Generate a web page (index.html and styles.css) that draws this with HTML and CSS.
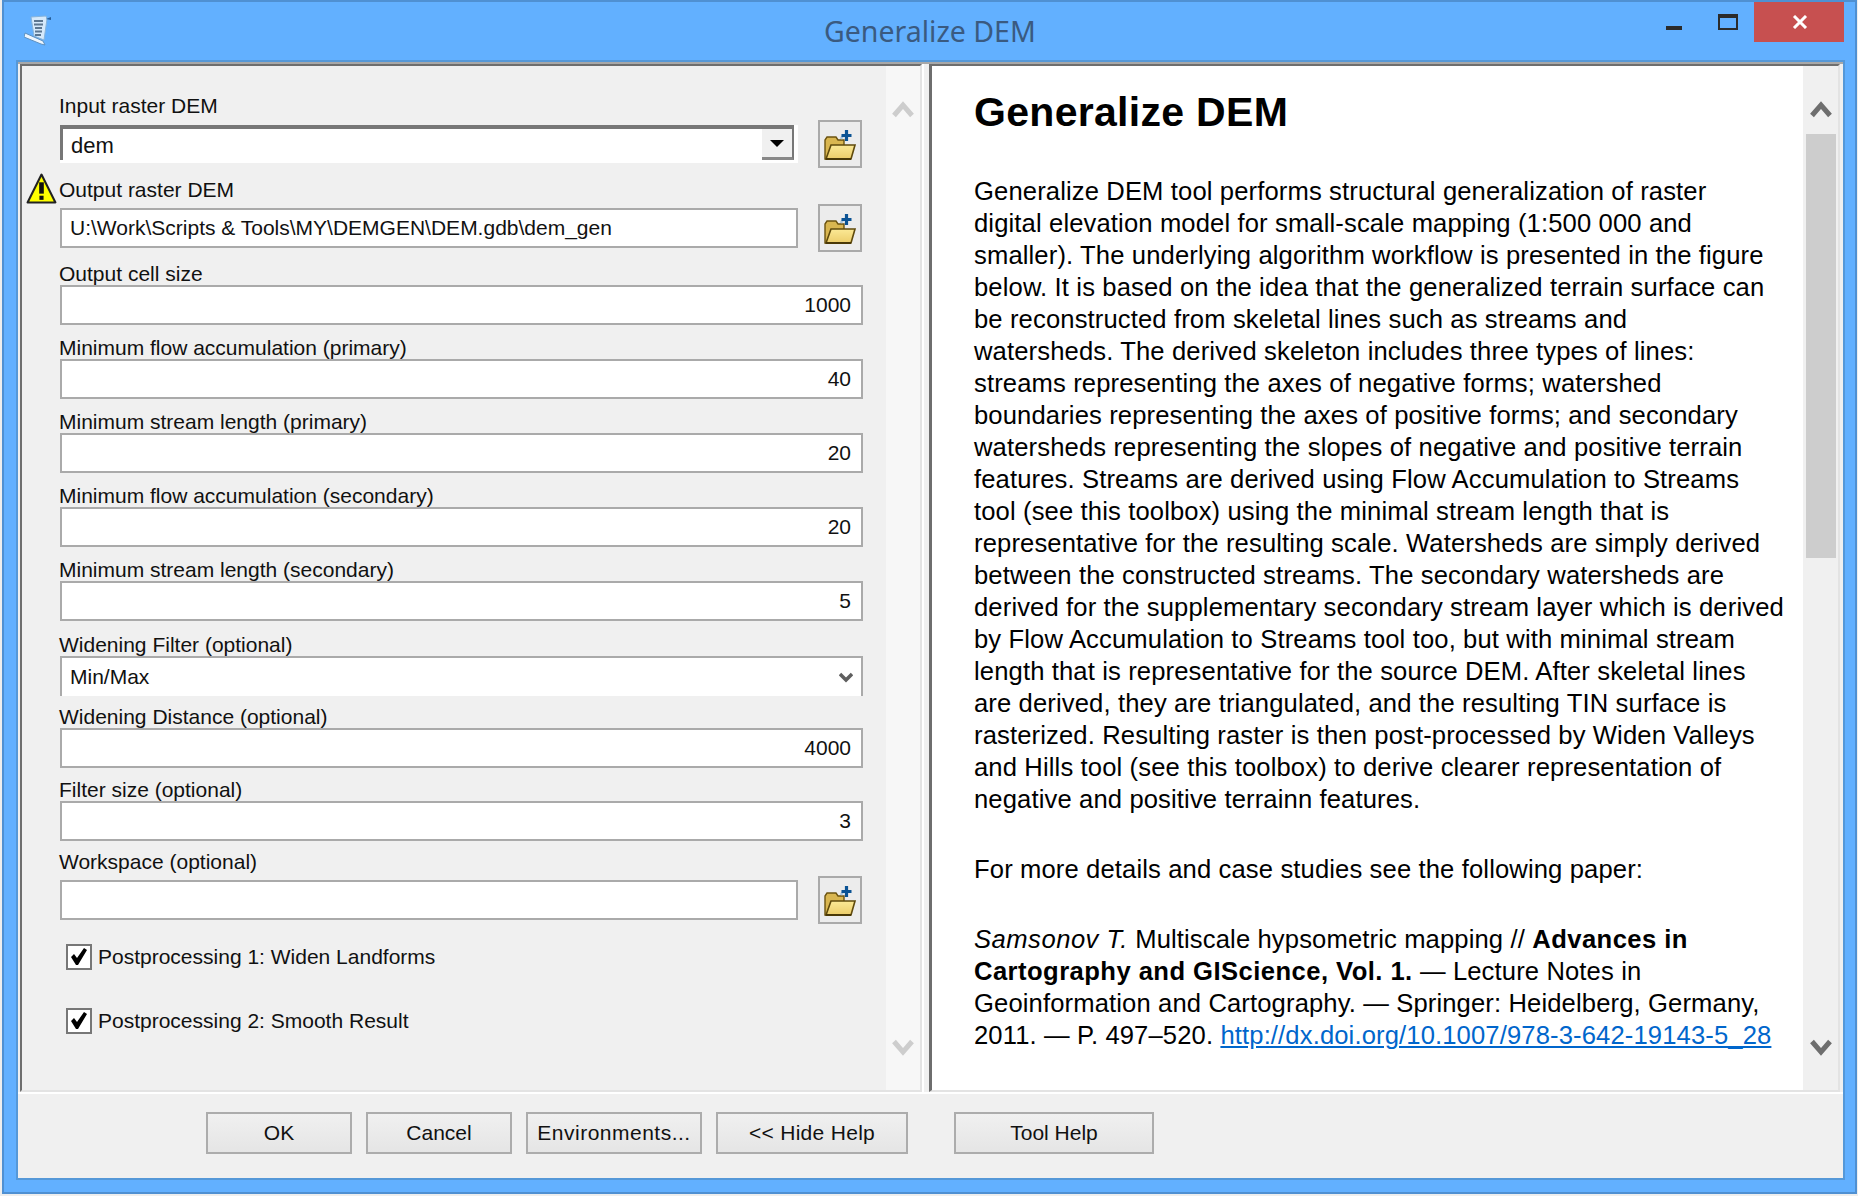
FILE: index.html
```html
<!DOCTYPE html>
<html>
<head>
    <title>Generalize DEM</title>
    <link rel="stylesheet" href="styles.css">
</head>
<body>
<svg class="defs" width="0" height="0">
    <defs>
        <linearGradient id="folderFront" x1="0" y1="0" x2="0" y2="1">
            <stop offset="0" stop-color="#fbe996"/>
            <stop offset="1" stop-color="#eccd6a"/>
        </linearGradient>
        <symbol id="folder" viewBox="0 0 32 30">
            <path d="M1 29V10l2-3h9l2 3h6v6H8L4 29z" fill="#d9b650" stroke="#6b5310" stroke-width="1.400"/>
            <path d="M2 29L7 15h24l-4 14z" fill="url(#folderFront)" stroke="#5f4a0c" stroke-width="1.600"/>
            <path d="M2 29h25" stroke="#4a3908" stroke-width="2"/>
            <path d="M17 9a6 6 0 0 1 6-4" fill="none" stroke="#a9c6dc" stroke-width="2.500"/>
            <path d="M22.500 0v11M17.500 5.500h10" stroke="#0b5394" stroke-width="3.200"/>
        </symbol>
    </defs>
</svg>
<div class="window">
    <div class="titlebar">
        <svg class="app-icon" viewBox="0 0 28 32">
            <path d="M7 3l15-1 1 3-3 21-10-4z" fill="#d5e9fb" stroke="#86b4dc"/>
            <path d="M1 19l18 8 2 4-4-1L0 23z" fill="#eef6fe" stroke="#5d90c0"/>
            <path d="M10 7h9M10 10.500h9M11 14h7M11 17.500h7M11 21h6" stroke="#5c7690" stroke-width="1.800"/>
            <path d="M22 5l5-2v3z" fill="#275f9a"/>
        </svg>
        <div class="title">Generalize DEM</div>
        <div class="caption">
            <svg class="cap-min" viewBox="0 0 16 4"><rect width="16" height="4" fill="#2b2b2b"/></svg>
            <svg class="cap-max" viewBox="0 0 20 16"><path d="M1 3h18v12H1z" fill="none" stroke="#2b2b2b" stroke-width="2"/><rect width="20" height="4" fill="#2b2b2b"/></svg>
            <div class="cap-close">
                <svg viewBox="0 0 16 14"><path d="M2 1l12 12M14 1L2 13" stroke="#fff" stroke-width="3"/></svg>
            </div>
        </div>
    </div>

    <div class="client">
        <div class="panes">
            <div class="pane-left">
                <form class="params">
                    <div class="field field-browse">
                        <label>Input raster DEM</label>
                        <div class="row">
                            <div class="combo">
                                <div class="combo-box">
                                    <span class="combo-text">dem</span>
                                    <span class="combo-btn"><i class="arrow"></i></span>
                                </div>
                            </div>
                            <button type="button" class="browse"><svg><use href="#folder"/></svg></button>
                        </div>
                    </div>
                    <div class="field field-browse">
                        <label>
                            <svg class="warn" viewBox="0 0 30 31">
                                <path d="M15 1.500L28.500 28.500H1.500z" fill="#ffff00" stroke="#222" stroke-width="2" stroke-linejoin="round"/>
                                <path d="M15 9v11" stroke="#111" stroke-width="4.500"/>
                                <rect x="13" y="22" width="4" height="4" fill="#111"/>
                            </svg>
                            Output raster DEM
                        </label>
                        <div class="row">
                            <div class="text-input">U:\Work\Scripts &amp; Tools\MY\DEMGEN\DEM.gdb\dem_gen</div>
                            <button type="button" class="browse"><svg><use href="#folder"/></svg></button>
                        </div>
                    </div>
                    <div class="field">
                        <label>Output cell size</label>
                        <div class="text-input num">1000</div>
                    </div>
                    <div class="field">
                        <label>Minimum flow accumulation (primary)</label>
                        <div class="text-input num">40</div>
                    </div>
                    <div class="field">
                        <label>Minimum stream length (primary)</label>
                        <div class="text-input num">20</div>
                    </div>
                    <div class="field">
                        <label>Minimum flow accumulation (secondary)</label>
                        <div class="text-input num">20</div>
                    </div>
                    <div class="field">
                        <label>Minimum stream length (secondary)</label>
                        <div class="text-input num">5</div>
                    </div>
                    <div class="field">
                        <label>Widening Filter (optional)</label>
                        <div class="select">
                            <span>Min/Max</span>
                            <svg class="select-arrow" viewBox="0 0 14 11"><path d="M1 2l6 6 6-6" fill="none" stroke="#5f5f5f" stroke-width="3.500"/></svg>
                        </div>
                    </div>
                    <div class="field">
                        <label>Widening Distance (optional)</label>
                        <div class="text-input num">4000</div>
                    </div>
                    <div class="field">
                        <label>Filter size (optional)</label>
                        <div class="text-input num">3</div>
                    </div>
                    <div class="field field-browse">
                        <label>Workspace (optional)</label>
                        <div class="row">
                            <div class="text-input"></div>
                            <button type="button" class="browse"><svg><use href="#folder"/></svg></button>
                        </div>
                    </div>
                    <div class="check-row">
                        <span class="check"><svg viewBox="0 0 22 22"><path d="M3 11l3-3 3 4 7-10 3 2-9 15h-2z" fill="#000"/></svg></span>
                        Postprocessing 1: Widen Landforms
                    </div>
                    <div class="check-row">
                        <span class="check"><svg viewBox="0 0 22 22"><path d="M3 11l3-3 3 4 7-10 3 2-9 15h-2z" fill="#000"/></svg></span>
                        Postprocessing 2: Smooth Result
                    </div>
                </form>
                <div class="scroll-strip">
                    <svg class="chev" viewBox="0 0 22 18"><path d="M2 15.500L11 5l9 10.500" fill="none" stroke="#cdcdcd" stroke-width="5"/></svg>
                    <svg class="chev" viewBox="0 0 22 18"><path d="M2 2.500L11 13l9-10.500" fill="none" stroke="#cdcdcd" stroke-width="5"/></svg>
                </div>
            </div>

            <div class="splitter"></div>

            <div class="pane-right">
                <div class="help">
                    <h1>Generalize DEM</h1>
                    <p>Generalize DEM tool performs structural generalization of raster<br>
                    digital elevation model for small-scale mapping (1:500 000 and<br>
                    smaller). The underlying algorithm workflow is presented in the figure<br>
                    below. It is based on the idea that the generalized terrain surface can<br>
                    be reconstructed from skeletal lines such as streams and<br>
                    watersheds. The derived skeleton includes three types of lines:<br>
                    streams representing the axes of negative forms; watershed<br>
                    boundaries representing the axes of positive forms; and secondary<br>
                    watersheds representing the slopes of negative and positive terrain<br>
                    features. Streams are derived using Flow Accumulation to Streams<br>
                    tool (see this toolbox) using the minimal stream length that is<br>
                    representative for the resulting scale. Watersheds are simply derived<br>
                    between the constructed streams. The secondary watersheds are<br>
                    derived for the supplementary secondary stream layer which is derived<br>
                    by Flow Accumulation to Streams tool too, but with minimal stream<br>
                    length that is representative for the source DEM. After skeletal lines<br>
                    are derived, they are triangulated, and the resulting TIN surface is<br>
                    rasterized. Resulting raster is then post-processed by Widen Valleys<br>
                    and Hills tool (see this toolbox) to derive clearer representation of<br>
                    negative and positive terrainn features.</p>
                    <p>For more details and case studies see the following paper:</p>
                    <p><em>Samsonov T.</em> Multiscale hypsometric mapping // <strong>Advances in<br>
                    Cartography and GIScience, Vol. 1.</strong> — Lecture Notes in<br>
                    Geoinformation and Cartography. — Springer: Heidelberg, Germany,<br>
                    2011. — P. 497–520. <a href="#">http://dx.doi.org/10.1007/978-3-642-19143-5_28</a></p>
                </div>
                <div class="help-scroll">
                    <svg class="chev" viewBox="0 0 22 18"><path d="M2 15.500L11 5l9 10.500" fill="none" stroke="#6e6e6e" stroke-width="5"/></svg>
                    <div class="thumb"></div>
                    <svg class="chev chev-end" viewBox="0 0 22 18"><path d="M2 2.500L11 13l9-10.500" fill="none" stroke="#6e6e6e" stroke-width="5"/></svg>
                </div>
            </div>
        </div>

        <div class="footer">
            <button type="button" class="btn btn-ok">OK</button>
            <button type="button" class="btn btn-cancel">Cancel</button>
            <button type="button" class="btn btn-env">Environments...</button>
            <button type="button" class="btn btn-hide">&lt;&lt; Hide Help</button>
            <button type="button" class="btn btn-tool">Tool Help</button>
        </div>
    </div>
</div>
</body>
</html>
```

FILE: styles.css
```css
* {
    box-sizing: border-box;
}

body {
    margin: 0;
    background-color: #eeeeee;
    font-family: "Liberation Sans", Arial, sans-serif;
    font-size: 21px;
    color: #111;
    overflow: hidden;
}

.defs {
    display: block;
    height: 0;
}

.window {
    width: 1855px;
    height: 1194px;
    margin-left: 2px;
    border: 2px solid #4f90d2;
    background-color: #62b0ff;
    padding: 0 10px 12px 12px;
    display: flex;
    flex-direction: column;
}

/* title bar */
.titlebar {
    height: 58px;
    margin-left: -12px;
    margin-right: -10px;
    display: flex;
    position: relative;
    flex: none;
}

.app-icon {
    width: 28px;
    height: 32px;
    margin: 12px 0 0 20px;
}

.title {
    position: absolute;
    left: 820px;
    top: 10px;
    font-family: "Noto Sans", sans-serif;
    font-size: 28.500px;
    line-height: 38px;
    color: #3a5a80;
}

.caption {
    margin-left: auto;
    display: flex;
    align-items: flex-start;
    margin-right: 11px;
}

.cap-min {
    width: 16px;
    height: 4px;
    margin-top: 24px;
}

.cap-max {
    width: 20px;
    height: 16px;
    margin: 12px 16px 0 36px;
}

.cap-close {
    width: 90px;
    height: 40px;
    padding-left: 2px;
    background-color: #c75050;
    display: flex;
    align-items: center;
    justify-content: center;
}

.cap-close svg {
    width: 16px;
    height: 14px;
}

/* main client area */
.client {
    flex: 1;
    border: 2px solid #5598d8;
    background-color: #f0f0f0;
    display: flex;
    flex-direction: column;
}

.panes {
    height: 1032px;
    flex: none;
    display: flex;
    border-top: 2px solid #a8a8a8;
    border-bottom: 2px solid #ffffff;
}

.pane-left {
    width: 902px;
    margin-left: 2px;
    border-top: 2px solid #6e6e6e;
    border-left: 2px solid #6e6e6e;
    border-right: 2px solid #e3e3e3;
    border-bottom: 2px solid #e3e3e3;
    display: flex;
}

.params {
    width: 864px;
    padding-left: 38px;
    display: grid;
    grid-template-rows: 98px 84px 77px 74px 74px 74px 74px 75px 72px 73px 79px 50px 64px;
    grid-template-columns: 803px;
}

.field {
    display: flex;
    flex-direction: column;
    justify-content: flex-end;
}

.field label {
    line-height: 24px;
    margin: 0 0 -1px -1px;
    position: relative;
    white-space: nowrap;
}

.field-browse label {
    margin-bottom: 6px;
}

.warn {
    position: absolute;
    left: -33px;
    top: -5px;
    width: 31px;
    height: 32px;
}

.row {
    display: flex;
    align-items: center;
    height: 40px;
}

.text-input {
    flex: 1;
    height: 40px;
    line-height: 36px;
    border: 2px solid #aaaaaa;
    background-color: #ffffff;
    padding: 0 10px 0 8px;
    white-space: nowrap;
}

.num {
    flex: none;
    text-align: right;
}

.browse {
    width: 44px;
    height: 48px;
    margin: 0 1px 0 20px;
    flex: none;
    padding: 2px 0 0;
    border: 2px solid #aaaaaa;
    background-color: #ececec;
    display: flex;
    align-items: center;
    justify-content: center;
}

.browse svg {
    display: block;
    width: 32px;
    height: 30px;
}

/* the first combo has the old sunken look */
.combo {
    flex: 1;
    height: 38px;
    background-color: #ffffff;
    padding: 0 4px 3px 0;
}

.combo-box {
    height: 35px;
    border-top: 4px solid #777777;
    border-left: 3px solid #777777;
    display: flex;
    justify-content: space-between;
}

.combo-text {
    padding-left: 8px;
    line-height: 34px;
    font-size: 22px;
}

.combo-btn {
    width: 32px;
    background-color: #f0f0f0;
    border-right: 2px solid #777777;
    border-bottom: 3px solid #888888;
    display: flex;
    align-items: center;
    justify-content: center;
}

.arrow {
    width: 0;
    height: 0;
    border-left: 7px solid transparent;
    border-right: 7px solid transparent;
    border-top: 7px solid #000;
}

.select {
    height: 40px;
    border: 2px solid #aaaaaa;
    border-bottom: none;
    background-color: #ffffff;
    padding: 0 8px;
    line-height: 36px;
    display: flex;
    justify-content: space-between;
    align-items: center;
}

.select-arrow {
    width: 14px;
    height: 11px;
}

.check-row {
    display: flex;
    align-items: flex-end;
    gap: 6px;
    padding-left: 6px;
    line-height: 27px;
}

.check {
    width: 26px;
    height: 26px;
    border: 2px solid #777777;
    background-color: #ffffff;
    display: block;
}

.check svg {
    display: block;
    width: 22px;
    height: 22px;
}

.scroll-strip {
    width: 34px;
    background-color: #f7f7f7;
    padding: 34px 6px 33px;
    display: flex;
    flex-direction: column;
    justify-content: space-between;
}

.chev {
    display: block;
    width: 22px;
    height: 18px;
    flex: none;
}

.splitter {
    width: 7px;
    border-left: 2px solid #ffffff;
}

/* help pane */
.pane-right {
    width: 911px;
    border-top: 2px solid #6e6e6e;
    border-left: 3px solid #6e6e6e;
    border-right: 2px solid #e3e3e3;
    border-bottom: 2px solid #e3e3e3;
    display: flex;
}

.help {
    width: 872px;
    background-color: #ffffff;
    padding: 23px 0 0 42px;
    font-size: 25.600px;
    letter-spacing: 0.130px;
    line-height: 32px;
    color: #000;
    white-space: nowrap;
    overflow: hidden;
}

.help h1 {
    font-size: 41px;
    letter-spacing: 0.300px;
    line-height: 46px;
    margin: 0 0 40px;
}

.help p {
    margin: 0 0 38px;
}

.help em {
    letter-spacing: 0.500px;
}

.help strong {
    letter-spacing: 0.450px;
}

.help a {
    color: #0066cc;
}

.help-scroll {
    width: 35px;
    background-color: #f0f0f0;
    padding-top: 34px;
    display: flex;
    flex-direction: column;
    align-items: center;
}

.thumb {
    width: 30px;
    height: 424px;
    margin-top: 16px;
    background-color: #cdcdcd;
}

.chev-end {
    margin-top: auto;
    margin-bottom: 33px;
}

/* buttons along the bottom */
.footer {
    flex: 1;
    display: flex;
    padding: 18px 0 0 188px;
    gap: 14px;
}

.btn {
    height: 42px;
    border: 2px solid #acacac;
    background: linear-gradient(#f0f0f0, #e5e5e5);
    font-family: inherit;
    font-size: 21px;
    color: #111;
    padding: 0;
}

.btn-ok, .btn-cancel {
    width: 146px;
}

.btn-env {
    width: 176px;
    letter-spacing: 0.500px;
}

.btn-hide {
    width: 192px;
    letter-spacing: 0.300px;
}

.btn-tool {
    width: 200px;
    margin-left: 32px;
}
```
